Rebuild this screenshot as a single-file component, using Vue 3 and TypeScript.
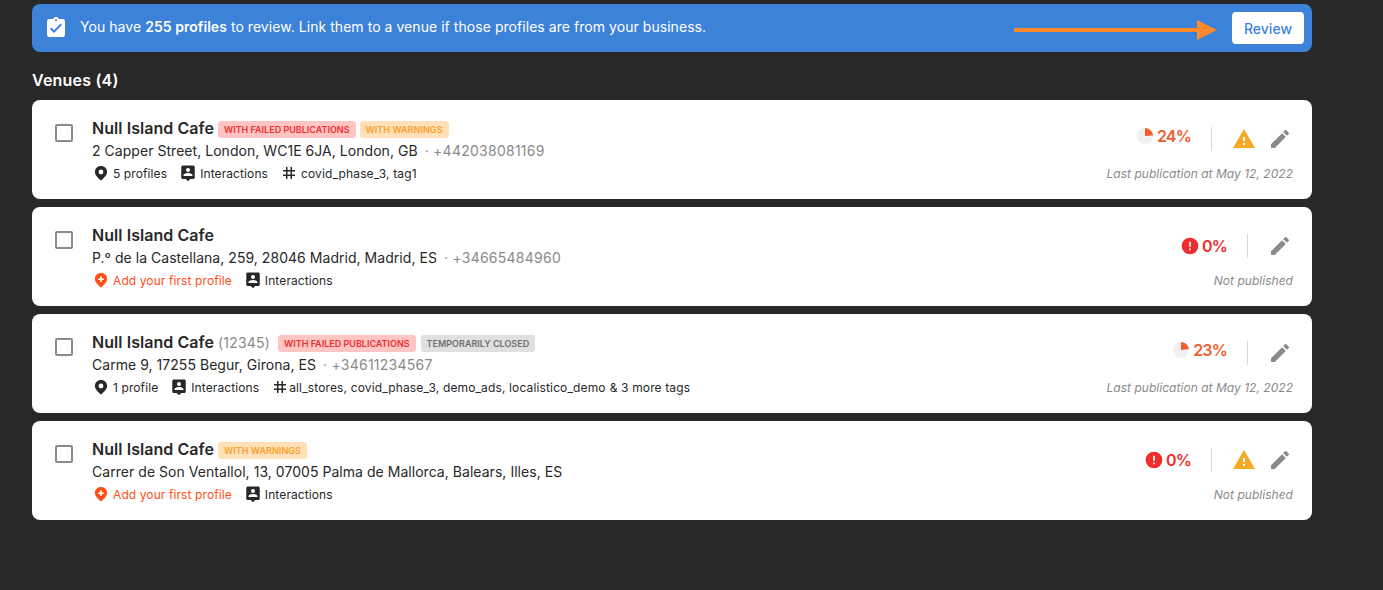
<script setup lang="ts">
interface Badge { text: string; kind: 'failed' | 'warn' | 'closed' }
interface Venue {
  code?: string
  badges: Badge[]
  address: string
  phone?: string
  profiles?: string
  tags?: string
  more?: string
  pct: number
  pctKind: 'pie' | 'alert'
  warn: boolean
  note: string
}
const failed: Badge = { text: 'WITH FAILED PUBLICATIONS', kind: 'failed' }
const warnB: Badge = { text: 'WITH WARNINGS', kind: 'warn' }
const closed: Badge = { text: 'TEMPORARILY CLOSED', kind: 'closed' }
const venues: Venue[] = [
  { badges: [failed, warnB], address: '2 Capper Street, London, WC1E 6JA, London, GB', phone: '+442038081169', profiles: '5 profiles', tags: 'covid_phase_3, tag1', pct: 24, pctKind: 'pie', warn: true, note: 'Last publication at May 12, 2022' },
  { badges: [], address: 'P.º de la Castellana, 259, 28046 Madrid, Madrid, ES', phone: '+34665484960', pct: 0, pctKind: 'alert', warn: false, note: 'Not published' },
  { code: '(12345)', badges: [failed, closed], address: 'Carme 9, 17255 Begur, Girona, ES', phone: '+34611234567', profiles: '1 profile', tags: 'all_stores, covid_phase_3, demo_ads, localistico_demo', more: '& 3 more tags', pct: 23, pctKind: 'pie', warn: false, note: 'Last publication at May 12, 2022' },
  { badges: [warnB], address: 'Carrer de Son Ventallol, 13, 07005 Palma de Mallorca, Balears, Illes, ES', pct: 0, pctKind: 'alert', warn: true, note: 'Not published' },
]
function piePath(p: number): string {
  const a = (p / 100) * 2 * Math.PI
  return `M8 8V0A8 8 0 0 1 ${(8 + 8 * Math.sin(a)).toFixed(2)} ${(8 - 8 * Math.cos(a)).toFixed(2)}Z`
}
</script>

<template>
  <div class="page">
    <div class="banner">
      <svg class="clip" width="24" height="24" viewBox="0 0 24 24"><path fill="#fff" d="M19 3h-4.180C14.400 1.840 13.300 1 12 1s-2.400.84-2.820 2H5c-1.100 0-2 .9-2 2v14c0 1.100.9 2 2 2h14c1.100 0 2-.9 2-2V5c0-1.100-.9-2-2-2zm-7 0c.55 0 1 .45 1 1s-.45 1-1 1-1-.45-1-1 .45-1 1-1zm-2 14-4-4 1.410-1.410L10 14.170l6.590-6.590L18 9l-8 8z"/></svg>
      <span class="banner-text">You have <b>255 profiles</b> to review. Link them to a venue if those profiles are from your business.</span>
      <button class="review">Review</button>
      <svg class="arrow" width="204" height="24" viewBox="0 0 204 24"><path fill="#ff8a2b" d="M0 10h183V2l20 10-20 10v-8H0z"/></svg>
    </div>
    <h2 class="title">Venues (4)</h2>
    <div class="list">
      <div v-for="(v, i) in venues" :key="i" class="card">
        <span class="check"></span>
        <div class="info">
          <div class="name-row">
            <span class="name">Null Island Cafe</span>
            <span v-if="v.code" class="code">{{ v.code }}</span>
            <span v-for="b in v.badges" :key="b.text" class="badge" :class="b.kind">{{ b.text }}</span>
          </div>
          <div class="addr-row">
            <span>{{ v.address }}</span>
            <span v-if="v.phone" class="phone">· {{ v.phone }}</span>
          </div>
          <div class="meta-row">
            <span v-if="v.profiles" class="meta">
              <svg width="18" height="18" viewBox="0 0 18 18"><path fill="#282828" fill-rule="evenodd" d="M9 2C5.500 2 2.900 4.600 2.900 7.900c0 3.300 3.700 6.400 6.100 8.600 2.400-2.200 6.100-5.300 6.100-8.600C15.100 4.600 12.500 2 9 2zm0 3.600a2.400 2.400 0 1 1 0 4.800 2.400 2.400 0 0 1 0-4.800z"/></svg>
              {{ v.profiles }}
            </span>
            <span v-else class="meta add">
              <svg width="18" height="18" viewBox="0 0 18 18"><path fill="#ff4f17" fill-rule="evenodd" d="M9 2C5.500 2 2.900 4.600 2.900 7.900c0 3.300 3.700 6.400 6.100 8.600 2.400-2.200 6.100-5.300 6.100-8.600C15.100 4.600 12.500 2 9 2zm-.8 3.300h1.600v2.100h2.100V9H9.800v2.100H8.200V9H6.100V7.400h2.100z"/></svg>
              Add your first profile
            </span>
            <span class="meta">
              <svg width="18" height="18" viewBox="0 0 24 24"><path fill="#282828" d="M19 2H5c-1.100 0-2 .9-2 2v14c0 1.100.9 2 2 2h4l3 3 3-3h4c1.100 0 2-.9 2-2V4c0-1.100-.9-2-2-2zm-7 3.300a2.700 2.700 0 1 1 0 5.400 2.700 2.700 0 0 1 0-5.400zM18 16H6v-.9c0-2 4-3.100 6-3.100s6 1.100 6 3.100v.9z"/></svg>
              Interactions
            </span>
            <span v-if="v.tags" class="meta tags" :class="{ tight: v.more }">
              <svg width="18" height="18" viewBox="0 0 24 24"><path fill="#282828" d="M20 10V8h-4V4h-2v4h-4V4H8v4H4v2h4v4H4v2h4v4h2v-4h4v4h2v-4h4v-2h-4v-4h4zm-6 4h-4v-4h4v4z"/></svg>
              <span>{{ v.tags }}</span><span v-if="v.more" class="more">{{ v.more }}</span>
            </span>
          </div>
        </div>
        <div class="side">
          <div class="status">
            <div class="score" :class="v.pctKind">
              <svg v-if="v.pctKind === 'pie'" width="16" height="16" viewBox="0 0 16 16"><circle cx="8" cy="8" r="8" fill="#f1f1f1"/><path :d="piePath(v.pct)" fill="#f0602f"/></svg>
              <svg v-else width="20" height="20" viewBox="0 0 24 24"><path fill="#ee2e2e" d="M12 2a10 10 0 1 0 0 20 10 10 0 0 0 0-20zm1 15h-2v-2h2v2zm0-4h-2V7h2v6z"/></svg>
              <span class="pct">{{ v.pct }}%</span>
            </div>
            <span class="divider"></span>
            <svg v-if="v.warn" class="warn-icon" width="24" height="24" viewBox="0 0 24 24"><path fill="#f9a825" d="M1 21h22L12 2 1 21zm12-3h-2v-2h2v2zm0-4h-2v-4h2v4z"/></svg>
            <svg class="edit" width="24" height="24" viewBox="0 0 24 24"><path fill="#8a8a8a" d="M3 17.250V21h3.750L17.810 9.940l-3.750-3.750L3 17.250zM20.710 7.040a1 1 0 0 0 0-1.410l-2.340-2.340a1 1 0 0 0-1.410 0l-1.830 1.830 3.750 3.750 1.830-1.830z"/></svg>
          </div>
          <div class="note">{{ v.note }}</div>
        </div>
      </div>
    </div>
  </div>
</template>

<style>
html, body { background: #282828; }
</style>

<style scoped>
.page {
  box-sizing: border-box;
  width: 1383px;
  height: 590px;
  padding: 4px 71px 0 32px;
  background: #282828;
  font-family: Inter, "Liberation Sans", sans-serif;
  color: #282828;
}
.banner {
  position: relative;
  display: flex;
  align-items: center;
  height: 48px;
  padding: 0 8px 0 12px;
  border-radius: 8px;
  background: #3d82d9;
  color: #fff;
  font-size: 14px;
}
.clip { flex: none; }
.banner-text { margin: 0 0 3px 12px; letter-spacing: 0.05px; }
.banner-text b { font-weight: 600; }
.review {
  margin-left: auto;
  width: 72px;
  height: 32px;
  border: 0;
  border-radius: 4px;
  background: #fff;
  color: #3d82d9;
  font: 500 14px Inter, "Liberation Sans", sans-serif;
}
.arrow { position: absolute; left: 982px; top: 14px; }
.title {
  margin: 18px 0 10px;
  font-size: 16px;
  line-height: 20px;
  font-weight: 600;
  letter-spacing: 0.2px;
  color: #fff;
}
.list { display: flex; flex-direction: column; gap: 8px; }
.card {
  display: flex;
  box-sizing: border-box;
  height: 99px;
  padding: 17px 19px 0 23px;
  background: #fff;
  border-radius: 8px;
}
.check {
  flex: none;
  box-sizing: border-box;
  width: 18px;
  height: 18px;
  margin-top: 7px;
  border: 2px solid #8a8a8a;
  border-radius: 2px;
}
.info { flex: 1; margin-left: 19px; }
.name-row { display: flex; align-items: center; height: 22px; }
.name { font-size: 16px; font-weight: 600; letter-spacing: 0.06px; }
.code { margin-left: 4px; font-size: 14px; letter-spacing: 0.2px; color: #8a8a8a; }
.badge {
  margin: 2px 0 0 4px;
  padding: 0 6px;
  height: 17px;
  line-height: 18px;
  border-radius: 3px;
  font-size: 9px;
  font-weight: 600;
}
.code + .badge { margin-left: 8px; }
.failed { background: #ffc5c5; color: #ee2e2e; }
.badge.warn { background: #ffe0b8; color: #f9a02c; letter-spacing: 0.05px; }
.closed { margin-left: 5px; background: #e0e0e0; color: #6f6f6f; }
.addr-row { margin-top: 1px; font-size: 14px; line-height: 22px; letter-spacing: 0.04px; }
.phone { margin-left: 7px; letter-spacing: 0.25px; color: #8a8a8a; }
.meta-row { display: flex; align-items: center; gap: 12px; height: 22px; font-size: 12px; letter-spacing: 0.1px; }
.meta { display: flex; align-items: center; gap: 3px; }
.meta svg { flex: none; }
.add { color: #ff4f17; }
.tags { letter-spacing: 0.14px; }
.tight { gap: 0; }
.more { margin-left: 4px; }
.side { display: flex; flex-direction: column; align-items: flex-end; }
.status { display: flex; align-items: center; height: 24px; margin: 10px 1px 0 0; }
.score { display: flex; align-items: center; }
.score.pie { gap: 4px; margin-bottom: 6px; color: #f0602f; }
.score.alert { gap: 2px; color: #ee2e2e; }
.pct { font-size: 16px; font-weight: 600; letter-spacing: -0.8px; }
.divider { width: 1px; height: 24px; margin: 0 20px; background: #d9d9d9; }
.warn-icon + .edit { margin-left: 12px; }
.note { margin-top: 15px; font-size: 12px; font-style: italic; letter-spacing: 0.03px; color: #8a8a8a; line-height: 16px; }
</style>
